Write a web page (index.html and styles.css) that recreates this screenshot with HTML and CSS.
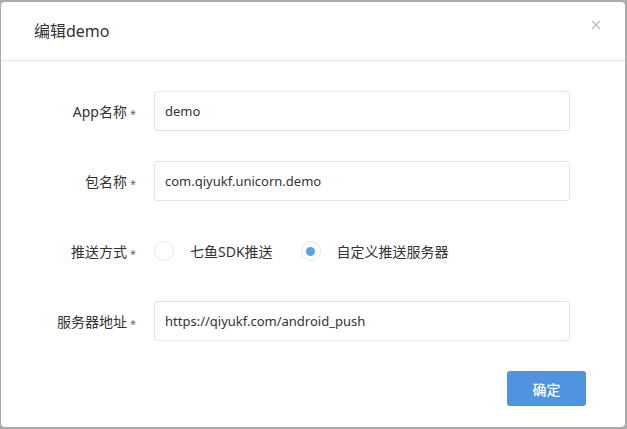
FILE: index.html
```html
<!DOCTYPE html>
<html lang="zh">
<head>
<meta charset="utf-8">
<title>编辑demo</title>
<link rel="stylesheet" href="styles.css">
</head>
<body>
<div class="modal">
  <div class="modal-header">
    <span class="modal-title">编辑demo</span>
    <span class="close">
      <svg width="10" height="10" viewBox="0 0 10 10"><path d="M1 1L9 9M9 1L1 9" stroke="#b8b8b8" stroke-width="1.1" fill="none"/></svg>
    </span>
  </div>
  <div class="modal-body">
    <div class="row">
      <label class="label">App名称<span class="req">*</span></label>
      <div class="input">demo</div>
    </div>
    <div class="row">
      <label class="label">包名称<span class="req">*</span></label>
      <div class="input">com.qiyukf.unicorn.demo</div>
    </div>
    <div class="row">
      <label class="label">推送方式<span class="req">*</span></label>
      <div class="radios">
        <span class="radio"><span class="circle"></span><span class="rtext">七鱼SDK推送</span></span>
        <span class="radio checked"><span class="circle"></span><span class="rtext">自定义推送服务器</span></span>
      </div>
    </div>
    <div class="row">
      <label class="label">服务器地址<span class="req">*</span></label>
      <div class="input">https://qiyukf.com/android_push</div>
    </div>
  </div>
  <div class="modal-footer">
    <button class="btn">确定</button>
  </div>
</div>
</body>
</html>
```
FILE: styles.css
```css
html, body {
  margin: 0;
  padding: 0;
}
body {
  background: #ababab;
  width: 627px;
  height: 429px;
  overflow: hidden;
  font-family: "Noto Sans", "Noto Sans CJK SC", sans-serif;
  color: #333;
}
.modal {
  margin: 2px 2px 0 1px;
  width: 624px;
  height: 425px;
  background: #fff;
  border-radius: 4px;
  box-sizing: border-box;
  display: flex;
  flex-direction: column;
}
.modal-header {
  height: 58px;
  border-bottom: 1px solid #e5e5e5;
  display: flex;
  align-items: center;
  justify-content: space-between;
  padding: 0 24px 0 33px;
  position: relative;
}
.modal-title {
  font-size: 16px;
  color: #333;
  margin-top: -2px;
}
.close {
  display: flex;
  margin-top: -12px;
}
.modal-body {
  padding: 30px 55px 0 0;
  display: flex;
  flex-direction: column;
  gap: 30px;
}
.row {
  display: flex;
  align-items: center;
  height: 40px;
}
.label {
  width: 135px;
  text-align: right;
  font-size: 14px;
  color: #333;
  margin-right: 18px;
  white-space: nowrap;
}
.req {
  color: #666;
  font-size: 11px;
  margin-left: 3px;
  position: relative;
  top: 1px;
}
.input {
  flex: 1;
  height: 40px;
  box-sizing: border-box;
  border: 1px solid #e4e4e4;
  border-radius: 3px;
  padding: 0 10px;
  display: flex;
  align-items: center;
  font-size: 13px;
  color: #333;
}
.radios {
  display: flex;
  align-items: center;
  gap: 28px;
}
.radio {
  display: flex;
  align-items: center;
  font-size: 14px;
  color: #333;
}
.circle {
  width: 20px;
  height: 20px;
  box-sizing: border-box;
  border: 1px solid #e3e8e8;
  border-radius: 50%;
  display: flex;
  align-items: center;
  justify-content: center;
  margin-right: 16px;
}
.radio.checked .circle::after {
  content: "";
  width: 9px;
  height: 9px;
  border-radius: 50%;
  background: #5aa0ea;
}
.modal-footer {
  display: flex;
  justify-content: flex-end;
  padding: 30px 39px 0 0;
}
.btn {
  width: 79px;
  height: 35px;
  border: none;
  border-radius: 3px;
  background: #5093e1;
  color: #fff;
  font-family: "Noto Sans CJK SC", sans-serif;
  font-size: 14px;
  font-weight: 500;
  padding: 0;
}
```
